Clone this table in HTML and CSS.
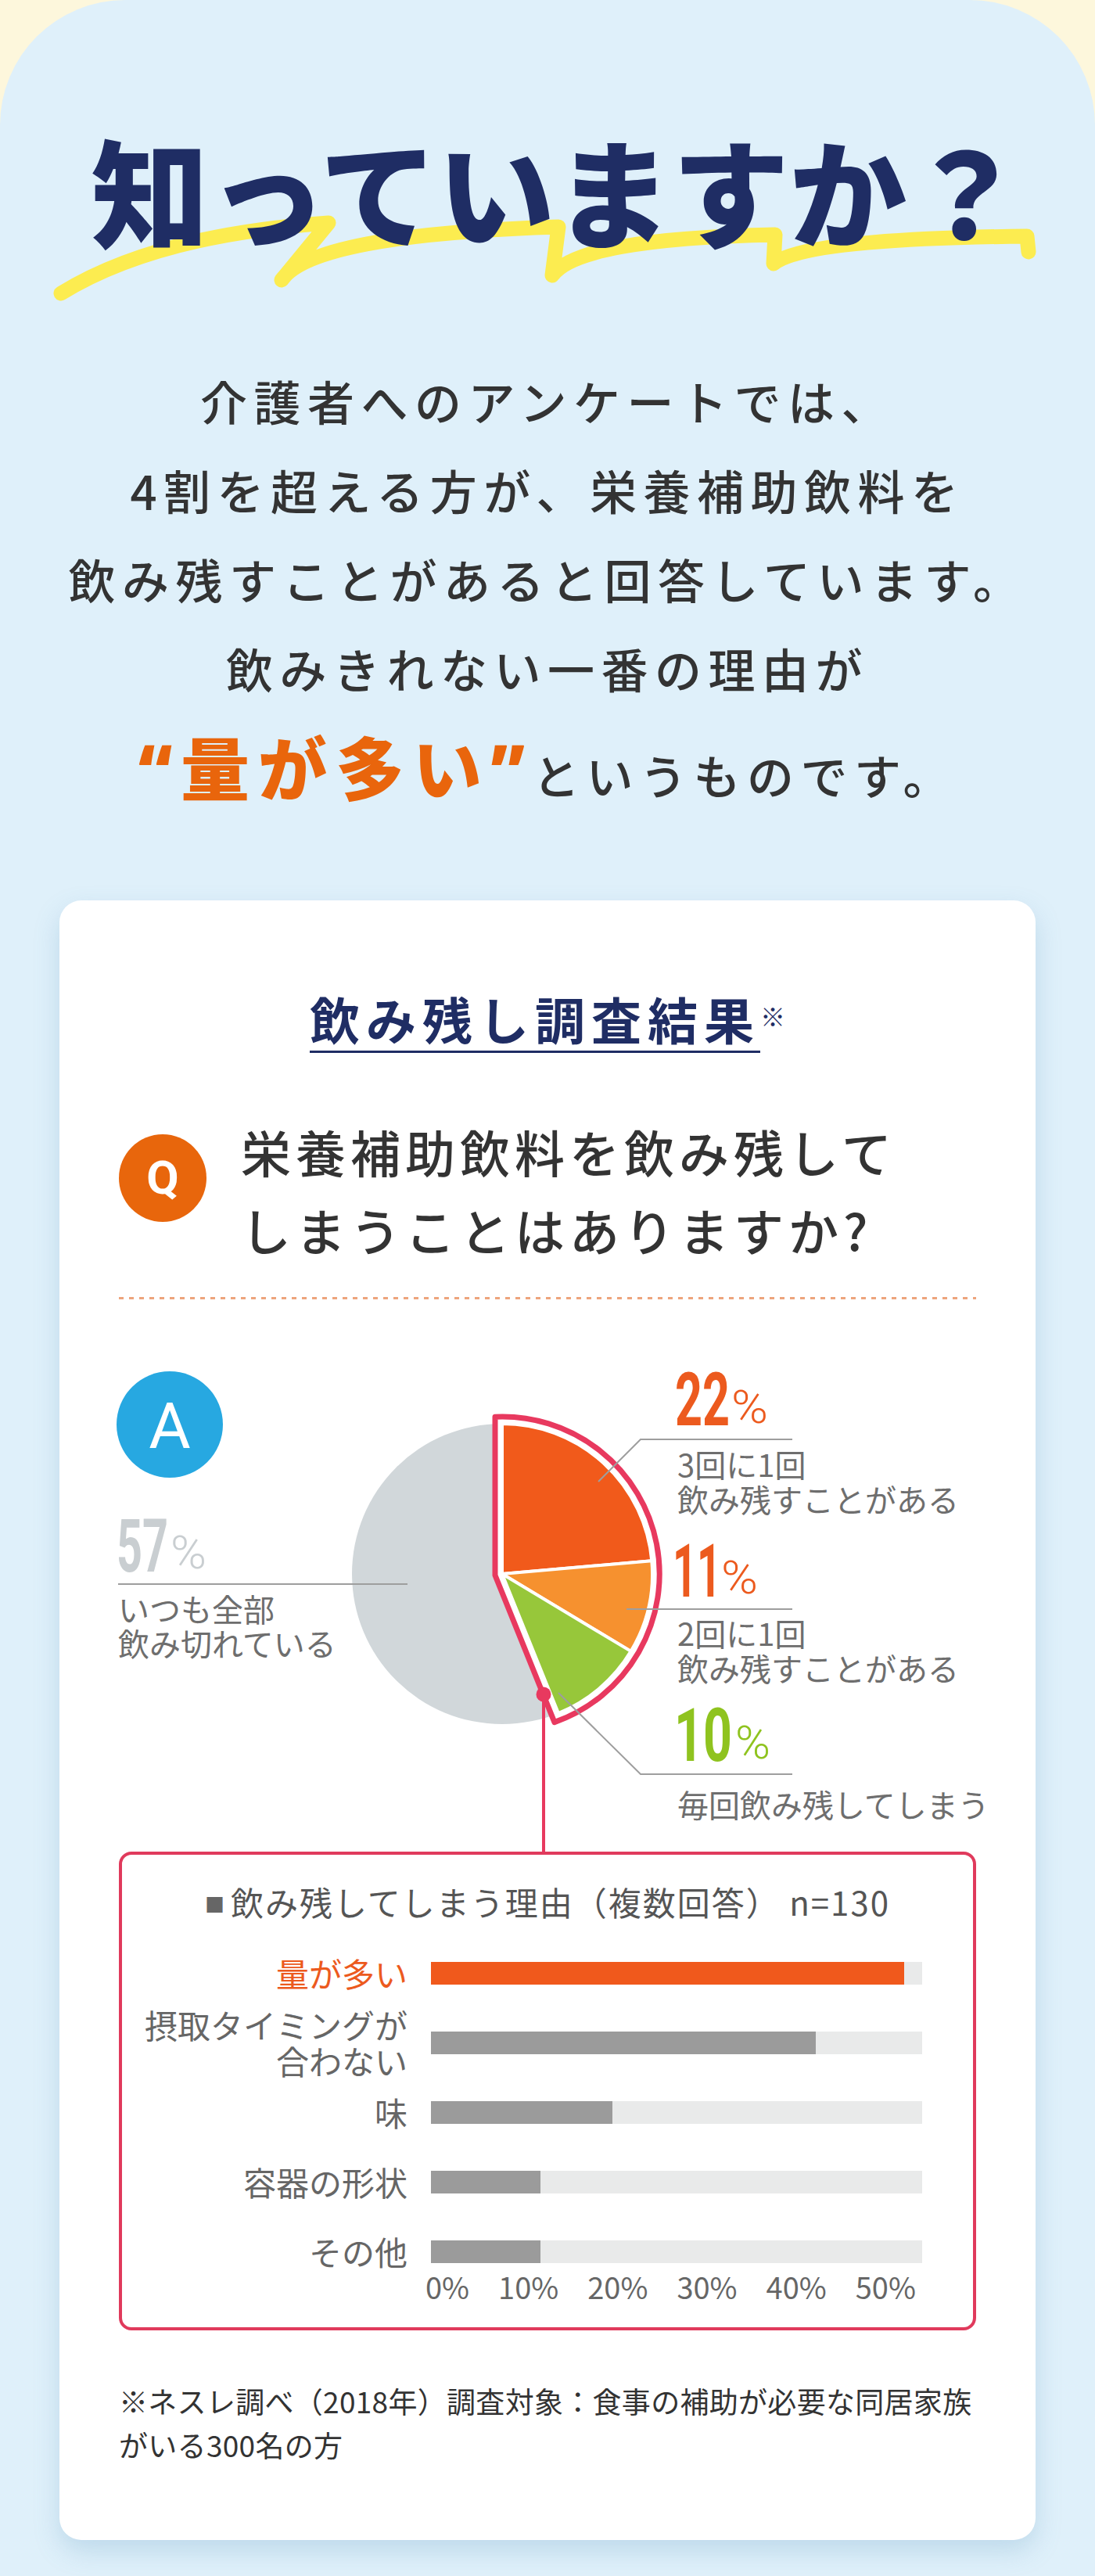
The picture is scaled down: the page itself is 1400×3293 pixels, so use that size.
FILE: index.html
```html
<!DOCTYPE html>
<html lang="ja">
<head>
<meta charset="utf-8">
<title>知っていますか？</title>
<link rel="stylesheet" href="styles.css">
</head>
<body>
<div class="page">
  <section class="panel">
    <svg class="brush" viewBox="0 0 1400 450" aria-hidden="true">
      <path d="M78 375 Q200 300 420 285 L360 358 Q400 300 714 290 L706 352 Q740 305 991 300 L989 337 Q1030 305 1313 302 L1315 322" />
    </svg>
    <h1 class="title">知っていますか？</h1>
    <p class="lead">介護者へのアンケートでは、<br>4割を超える方が、栄養補助飲料を<br>飲み残すことがあると回答しています。<br>飲みきれない一番の理由が</p>
    <p class="lead lead-last"><span class="big"><span class="qm">“</span>量が多い<span class="qm">”</span></span>というものです。</p>

    <div class="card">
      <div class="card-head">
        <h2 class="card-title">飲み残し調査結果</h2><span class="kome">※</span>
      </div>

      <div class="q-row">
        <div class="q-badge">Q</div>
        <p class="q-text">栄養補助飲料を飲み残して<br>しまうことはありますか?</p>
      </div>

      <div class="dots"></div>

      <svg class="chart" viewBox="152 1700 1096 668">
        <circle cx="217" cy="1822" r="68" class="a-badge"/>
        <text x="217" y="1852" text-anchor="middle" class="a-letter">A</text>

        <circle cx="642" cy="2013" r="192" class="pie-rest"/>
        <path class="pie-frame" d="M633 1812.2 A201 201 0 0 1 708.9 2202.6 L633 2014.7 Z"/>
        <path class="slice s1" d="M642 2013 L642 1821 A192 192 0 0 1 833.3 1996.3 Z"/>
        <path class="slice s2" d="M642 2013 L833.3 1996.3 A192 192 0 0 1 806.6 2111.9 Z"/>
        <path class="slice s3" d="M642 2013 L806.6 2111.9 A192 192 0 0 1 713.9 2191 Z"/>

        <line x1="695" y1="2167" x2="695" y2="2368" class="pin-line"/>
        <circle cx="695" cy="2167" r="9.5" class="pin-dot"/>

        <path class="leader" d="M151 2026 H521"/>
        <path class="leader" d="M765 1895 L819 1841 H1013"/>
        <path class="leader" d="M801 2058 H1013"/>
        <path class="leader" d="M714 2165 L819 2269 H1013"/>

        <text x="149" y="2010" class="num c-gray" textLength="66" lengthAdjust="spacingAndGlyphs">57</text>
        <text x="218" y="2006" class="pc c-gray" textLength="46" lengthAdjust="spacingAndGlyphs">%</text>
        <text x="151" y="2074" class="lbl">いつも全部</text>
        <text x="151" y="2118" class="lbl">飲み切れている</text>

        <text x="863" y="1823" class="num c-red" textLength="70" lengthAdjust="spacingAndGlyphs">22</text>
        <text x="935" y="1820" class="pc c-red" textLength="47" lengthAdjust="spacingAndGlyphs">%</text>
        <text x="866" y="1889" class="lbl">3回に1回</text>
        <text x="866" y="1934" class="lbl">飲み残すことがある</text>

        <text x="860" y="2042" class="num c-red" textLength="62" lengthAdjust="spacingAndGlyphs">11</text>
        <text x="922" y="2038" class="pc c-red" textLength="47" lengthAdjust="spacingAndGlyphs">%</text>
        <text x="866" y="2105" class="lbl">2回に1回</text>
        <text x="866" y="2150" class="lbl">飲み残すことがある</text>

        <text x="862" y="2252" class="num c-green" textLength="74" lengthAdjust="spacingAndGlyphs">10</text>
        <text x="940" y="2249" class="pc c-green" textLength="45" lengthAdjust="spacingAndGlyphs">%</text>
        <text x="866" y="2324" class="lbl">毎回飲み残してしまう</text>
      </svg>

      <div class="reasons">
        <p class="r-head"><span class="sq">■</span>飲み残してしまう理由（複数回答） n=130</p>
        <div class="r-rows">
          <div class="r-lab hot">量が多い</div>
          <div class="r-track"><div class="r-fill hot" style="width:96.3%"></div></div>
          <div class="r-lab">摂取タイミングが<br>合わない</div>
          <div class="r-track"><div class="r-fill" style="width:78.3%"></div></div>
          <div class="r-lab">味</div>
          <div class="r-track"><div class="r-fill" style="width:36.9%"></div></div>
          <div class="r-lab">容器の形状</div>
          <div class="r-track"><div class="r-fill" style="width:22.3%"></div></div>
          <div class="r-lab">その他</div>
          <div class="r-track"><div class="r-fill" style="width:22.3%"></div></div>
        </div>
        <div class="r-axis"><span>0%</span><span>10%</span><span>20%</span><span>30%</span><span>40%</span><span>50%</span></div>
      </div>

      <p class="note">※ネスレ調べ（2018年）調査対象：食事の補助が必要な同居家族がいる300名の方</p>
    </div>
  </section>
</div>
</body>
</html>
```

FILE: styles.css
```css
html, body {
  margin: 0;
  padding: 0;
}
body {
  font-family: "Noto Sans CJK JP", "Noto Sans", sans-serif;
  background: #fdf7dc;
}
.page {
  width: 1400px;
  background: #fdf7dc;
}
.panel {
  position: relative;
  background: #dff0fa;
  border-radius: 160px 160px 0 0;
  padding: 166px 0 48px;
}
.brush {
  position: absolute;
  left: 0;
  top: 0;
  width: 1400px;
  height: 450px;
  z-index: 0;
}
.brush path {
  fill: none;
  stroke: #fcec50;
  stroke-width: 19;
  stroke-linecap: round;
  stroke-linejoin: round;
}
.title {
  position: relative;
  z-index: 1;
  margin: 0;
  padding-left: 26px;
  text-align: center;
  font-family: "Noto Sans CJK JP", sans-serif;
  font-weight: 900;
  font-size: 150px;
  line-height: 150px;
  height: 150px;
  color: #1f2d64;
  white-space: nowrap;
}
.lead {
  position: relative;
  z-index: 1;
  margin: 139px 0 0;
  text-align: center;
  font-family: "Noto Sans CJK JP", sans-serif;
  font-weight: 500;
  font-size: 60px;
  line-height: 114px;
  letter-spacing: 8.5px;
  color: #333333;
  white-space: nowrap;
}
.lead-last {
  margin-top: 10px;
  height: 126px;
}
.big {
  font-size: 88px;
  font-weight: 900;
  letter-spacing: 11px;
  color: #e9650c;
}
.qm {
  font-family: "Noto Sans", sans-serif;
  letter-spacing: 10px;
}

.card {
  position: relative;
  z-index: 1;
  margin: 104px 76px 0;
  background: #ffffff;
  border-radius: 28px;
  box-shadow: 0 14px 32px rgba(90, 150, 190, 0.25);
  padding: 118px 76px 94px;
}
.card-head {
  display: flex;
  justify-content: center;
  align-items: flex-start;
}
.card-title {
  margin: 0;
  font-family: "Noto Sans CJK JP", sans-serif;
  font-weight: 700;
  font-size: 64px;
  line-height: 64px;
  letter-spacing: 8px;
  color: #1f2d64;
  padding-bottom: 10px;
  border-bottom: 3px solid #1f2d64;
  white-space: nowrap;
}
.kome {
  margin-top: 13px;
  font-size: 32px;
  line-height: 32px;
  color: #1f2d64;
}
.q-row {
  display: flex;
  align-items: flex-start;
  margin-top: 75px;
}
.q-badge {
  flex: none;
  width: 112px;
  height: 112px;
  margin-top: 29px;
  border-radius: 50%;
  background: #e8660c;
  color: #ffffff;
  display: flex;
  align-items: center;
  justify-content: center;
  font-family: Roboto, "Liberation Sans", sans-serif;
  font-weight: 700;
  font-size: 60px;
  line-height: 1;
}
.q-text {
  margin: 0 0 0 44px;
  font-family: "Noto Sans CJK JP", sans-serif;
  font-weight: 500;
  font-size: 64px;
  line-height: 100px;
  letter-spacing: 6px;
  color: #333333;
  white-space: nowrap;
}
.dots {
  margin-top: 37px;
  height: 3px;
  background: linear-gradient(90deg, #eda47c 0, #eda47c 6px, transparent 6px) 0 0 / 13px 3px repeat-x;
}
.chart {
  display: block;
  margin-top: 38px;
  width: 1096px;
  height: 668px;
  overflow: visible;
}
.a-badge { fill: #27a8e1; }
.a-letter {
  fill: #ffffff;
  font-family: Roboto, "Liberation Sans", sans-serif;
  font-weight: 400;
  font-size: 82px;
}
.pie-rest { fill: #d1d7da; }
.pie-frame {
  fill: #ffffff;
  stroke: #e8395f;
  stroke-width: 7;
  stroke-linejoin: round;
}
.slice {
  stroke: #ffffff;
  stroke-width: 4;
  stroke-linejoin: round;
}
.s1 { fill: #f15a1b; }
.s2 { fill: #f6912f; }
.s3 { fill: #97c73a; }
.pin-line {
  stroke: #e8395f;
  stroke-width: 4;
}
.pin-dot { fill: #e8395f; }
.leader {
  fill: none;
  stroke: #9e9e9e;
  stroke-width: 2;
}
.num {
  font-family: Roboto, "Liberation Sans", sans-serif;
  font-weight: 700;
  font-size: 95px;
}
.pc {
  font-family: Roboto, "Liberation Sans", sans-serif;
  font-weight: 300;
  font-size: 59px;
}
.c-gray { fill: #c9ced1; }
.c-red { fill: #ec5a1e; }
.c-green { fill: #8fc31f; }
.lbl {
  font-family: "Noto Sans CJK JP", sans-serif;
  font-weight: 400;
  font-size: 40px;
  fill: #6e6e6e;
}

.reasons {
  border: 4px solid #e03a5c;
  border-radius: 16px;
  padding: 34px 0 32.5px;
}
.r-head {
  margin: 0;
  text-align: center;
  font-family: "Noto Sans CJK JP", sans-serif;
  font-weight: 400;
  font-size: 42px;
  line-height: 52px;
  letter-spacing: 2px;
  color: #555555;
  white-space: nowrap;
}
.sq {
  font-size: 25px;
  letter-spacing: 8px;
  color: #666666;
  vertical-align: 4px;
}
.r-rows {
  margin: 17.5px 65px 0 0;
  display: grid;
  grid-template-columns: 365px 628px;
  column-gap: 30px;
  grid-auto-rows: 89px;
  align-items: center;
}
.r-lab {
  text-align: right;
  font-family: "Noto Sans CJK JP", sans-serif;
  font-weight: 400;
  font-size: 42px;
  line-height: 46px;
  color: #666666;
  white-space: nowrap;
}
.r-lab.hot { color: #ec5a1e; }
.r-track {
  height: 29px;
  background: #e9eaea;
}
.r-fill {
  height: 100%;
  background: #9b9b9b;
}
.r-fill.hot { background: #f0591c; }
.r-axis {
  display: flex;
  justify-content: space-between;
  width: 627px;
  margin: -20px 0 0 388px;
  font-family: "Noto Sans CJK JP", sans-serif;
  font-weight: 400;
  font-size: 38px;
  line-height: 40px;
  color: #666666;
}
.note {
  margin: 62px 0 0;
  font-family: "Noto Sans CJK JP", sans-serif;
  font-weight: 400;
  font-size: 37px;
  line-height: 56px;
  letter-spacing: 0.3px;
  color: #333333;
}
```
